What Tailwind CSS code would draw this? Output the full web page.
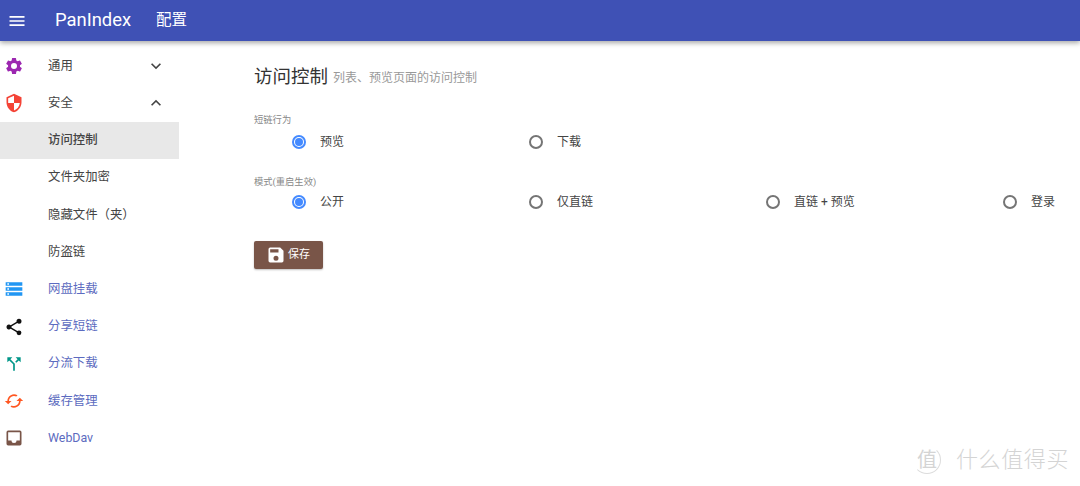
<!doctype html>
<html lang="zh-CN">

<head>
  <meta charset="UTF-8" />
  <title>PanIndex</title>
  <script src="https://cdn.jsdelivr.net/npm/@tailwindcss/browser@4"></script>
</head>

<body class="relative h-[486px] w-[1080px] overflow-hidden bg-white font-['Roboto','Noto_Sans_CJK_SC',sans-serif] text-[#444]">
  <!-- Top bar -->
  <header class="relative z-10 flex h-[41px] items-center bg-[#3f51b5] text-white shadow-[0_2px_5px_rgba(0,0,0,0.35)]">
    <svg class="ml-[7px] h-5 w-5" viewBox="0 0 24 24" fill="currentColor">
      <path d="M3 18h18v-2H3v2zm0-5h18v-2H3v2zm0-7v2h18V6H3z" />
    </svg>
    <span class="ml-[28px] text-[18.4px] leading-none">PanIndex</span>
    <span class="ml-[25px] text-[15.5px] leading-none">配置</span>
  </header>

  <div class="flex">
    <!-- Sidebar -->
    <nav class="w-[179px] shrink-0 pt-[6.6px] text-[12.4px]">
      <div class="flex h-[37.2px] items-center">
        <svg class="ml-[4px] h-5 w-5 text-[#9c27b0]" viewBox="0 0 24 24" fill="currentColor">
          <path d="M19.14 12.94a7.5 7.5 0 0 0 .06-.94 7.5 7.5 0 0 0-.07-.94l2.03-1.58a.5.5 0 0 0 .12-.61l-1.92-3.32a.5.5 0 0 0-.59-.22l-2.39.96a7 7 0 0 0-1.62-.94l-.36-2.54a.5.5 0 0 0-.48-.41h-3.84a.5.5 0 0 0-.47.41l-.36 2.54a7.3 7.3 0 0 0-1.62.94l-2.39-.96a.5.5 0 0 0-.59.22L2.74 8.87a.5.5 0 0 0 .12.61l2.03 1.58a7 7 0 0 0 0 1.88l-2.03 1.58a.5.5 0 0 0-.12.61l1.92 3.32c.12.22.37.29.59.22l2.39-.96c.5.38 1.03.7 1.62.94l.36 2.54c.05.24.24.41.48.41h3.84c.24 0 .44-.17.47-.41l.36-2.54a7 7 0 0 0 1.62-.94l2.39.96c.22.08.47 0 .59-.22l1.92-3.32a.5.5 0 0 0-.12-.61l-2.01-1.58zM12 15.6a3.6 3.6 0 1 1 0-7.2 3.6 3.6 0 0 1 0 7.2z" />
        </svg>
        <span class="ml-[24px] flex-1">通用</span>
        <svg class="mr-[13px] h-5 w-5 text-[#444]" viewBox="0 0 24 24" fill="currentColor">
          <path d="M7.41 8.59 12 13.17l4.59-4.58L18 10l-6 6-6-6z" />
        </svg>
      </div>
      <div class="flex h-[37.2px] items-center">
        <svg class="ml-[4px] h-5 w-5 text-[#f44336]" viewBox="0 0 24 24" fill="currentColor">
          <path d="M12 1 3 5v6c0 5.55 3.84 10.74 9 12 5.16-1.26 9-6.45 9-12V5l-9-4zm0 10.99h7c-.53 4.12-3.28 7.79-7 8.94V12H5V6.3l7-3.11v8.8z" />
        </svg>
        <span class="ml-[24px] flex-1">安全</span>
        <svg class="mr-[13px] h-5 w-5 text-[#444]" viewBox="0 0 24 24" fill="currentColor">
          <path d="M7.41 15.41 12 10.83l4.59 4.58L18 14l-6-6-6 6z" />
        </svg>
      </div>
      <div class="flex h-[37.2px] items-center bg-[#e8e8e8] pl-[48px] font-medium">访问控制</div>
      <div class="flex h-[37.2px] items-center pl-[48px]">文件夹加密</div>
      <div class="flex h-[37.2px] items-center pl-[48px]">隐藏文件（夹）</div>
      <div class="flex h-[37.2px] items-center pl-[48px]">防盗链</div>
      <div class="flex h-[37.2px] items-center text-[#5c6bc0]">
        <svg class="ml-[4px] h-5 w-5 text-[#2196f3]" viewBox="0 0 24 24" fill="currentColor">
          <path d="M2 20h20v-4H2v4zm2-3h2v2H4v-2zM2 4v4h20V4H2zm4 3H4V5h2v2zm-4 7h20v-4H2v4zm2-3h2v2H4v-2z" />
        </svg>
        <span class="ml-[24px]">网盘挂载</span>
      </div>
      <div class="flex h-[37.2px] items-center text-[#5c6bc0]">
        <svg class="ml-[4px] h-5 w-5 text-[#111]" viewBox="0 0 24 24" fill="currentColor">
          <path d="M18 16.08c-.76 0-1.44.3-1.96.77L8.91 12.7c.05-.23.09-.46.09-.7s-.04-.47-.09-.7l7.05-4.11c.54.5 1.25.81 2.04.81a3 3 0 1 0-3-3c0 .24.04.47.09.7L8.04 9.81A3 3 0 0 0 6 9a3 3 0 1 0 2.04 5.19l7.12 4.16c-.05.21-.08.43-.08.65a2.92 2.92 0 1 0 2.92-2.92z" />
        </svg>
        <span class="ml-[24px]">分享短链</span>
      </div>
      <div class="flex h-[37.2px] items-center text-[#5c6bc0]">
        <svg class="ml-[4px] h-5 w-5 text-[#009688]" viewBox="0 0 24 24" fill="currentColor">
          <path d="m14 4 2.29 2.29-2.88 2.88 1.42 1.42 2.88-2.88L20 10V4h-6zm-4 0H4v6l2.29-2.29 4.71 4.7V20h2v-8.41l-5.29-5.3L10 4z" />
        </svg>
        <span class="ml-[24px]">分流下载</span>
      </div>
      <div class="flex h-[37.2px] items-center text-[#5c6bc0]">
        <svg class="ml-[4px] h-5 w-5 text-[#ff5722]" viewBox="0 0 24 24" fill="currentColor">
          <path d="m19 8-4 4h3a6 6 0 0 1-8.8 5.3l-1.46 1.46A8 8 0 0 0 20 12h3l-4-4zM6 12a6 6 0 0 1 8.8-5.3l1.46-1.46A8 8 0 0 0 4 12H1l4 4 4-4H6z" />
        </svg>
        <span class="ml-[24px]">缓存管理</span>
      </div>
      <div class="flex h-[37.2px] items-center text-[#5c6bc0]">
        <svg class="ml-[4px] h-5 w-5 text-[#795548]" viewBox="0 0 24 24" fill="currentColor">
          <path d="M19 3H5a2 2 0 0 0-2 2v14a2 2 0 0 0 2 2h14a2 2 0 0 0 2-2V5a2 2 0 0 0-2-2zm0 12h-4a3 3 0 0 1-6 0H5V5h14v10z" />
        </svg>
        <span class="ml-[24px]">WebDav</span>
      </div>
    </nav>

    <!-- Main -->
    <main class="flex-1 pl-[75px] pt-[23px]">
      <div class="flex h-[26px] items-center">
        <h1 class="text-[18.5px] font-normal leading-none text-[#333]">访问控制</h1>
        <span class="ml-[5px] mt-[2px] text-[12px] leading-none text-[#999]">列表、预览页面的访问控制</span>
      </div>

      <div class="mt-[23px] text-[9.3px] leading-[14px] text-[#888]">短链行为</div>
      <div class="mt-[3px] grid h-[24px] grid-cols-[237px_237px] items-center text-[12px]">
        <label class="flex items-center pl-[38px]">
          <span class="flex h-[14px] w-[14px] items-center justify-center rounded-full border-2 border-[#448aff]"><span class="h-[8px] w-[8px] rounded-full bg-[#448aff]"></span></span>
          <span class="ml-[14px]">预览</span>
        </label>
        <label class="flex items-center pl-[38px]">
          <span class="h-[14px] w-[14px] rounded-full border-2 border-[#757575]"></span>
          <span class="ml-[14px]">下载</span>
        </label>
      </div>

      <div class="mt-[21px] text-[9.3px] leading-[14px] text-[#888]">模式(重启生效)</div>
      <div class="mt-[1px] grid h-[24px] w-[826px] grid-cols-[237px_237px_237px_115px] items-center text-[12px]">
        <label class="flex items-center pl-[38px]">
          <span class="flex h-[14px] w-[14px] items-center justify-center rounded-full border-2 border-[#448aff]"><span class="h-[8px] w-[8px] rounded-full bg-[#448aff]"></span></span>
          <span class="ml-[14px]">公开</span>
        </label>
        <label class="flex items-center pl-[38px]">
          <span class="h-[14px] w-[14px] rounded-full border-2 border-[#757575]"></span>
          <span class="ml-[14px]">仅直链</span>
        </label>
        <label class="flex items-center pl-[38px]">
          <span class="h-[14px] w-[14px] rounded-full border-2 border-[#757575]"></span>
          <span class="ml-[14px]">直链 + 预览</span>
        </label>
        <label class="flex items-center pl-[38px]">
          <span class="h-[14px] w-[14px] rounded-full border-2 border-[#757575]"></span>
          <span class="ml-[14px]">登录</span>
        </label>
      </div>

      <button class="mt-[27px] flex h-[28px] w-[69px] items-center rounded-[2px] bg-[#795548] pl-[12px] text-[11px] text-white shadow-[0_1px_2px_rgba(0,0,0,0.25)]">
        <svg class="h-5 w-5" viewBox="0 0 24 24" fill="currentColor">
          <path d="M17 3H5a2 2 0 0 0-2 2v14a2 2 0 0 0 2 2h14a2 2 0 0 0 2-2V7l-4-4zm-5 16a3 3 0 1 1 0-6 3 3 0 0 1 0 6zm3-10H5V5h10v4z" />
        </svg>
        <span class="ml-[2px]">保存</span>
      </button>
    </main>
  </div>

  <!-- Watermark -->
  <div class="absolute left-[913px] top-[446px] flex items-center text-[#d4d4d4]">
    <span class="flex h-[28px] w-[28px] items-center justify-center rounded-full border border-[#dcdcdc] border-l-transparent border-t-transparent text-[20px] leading-none">值</span>
    <span class="ml-[15px] text-[22px] font-light leading-none tracking-[0.6px]">什么值得买</span>
  </div>
</body>

</html>
